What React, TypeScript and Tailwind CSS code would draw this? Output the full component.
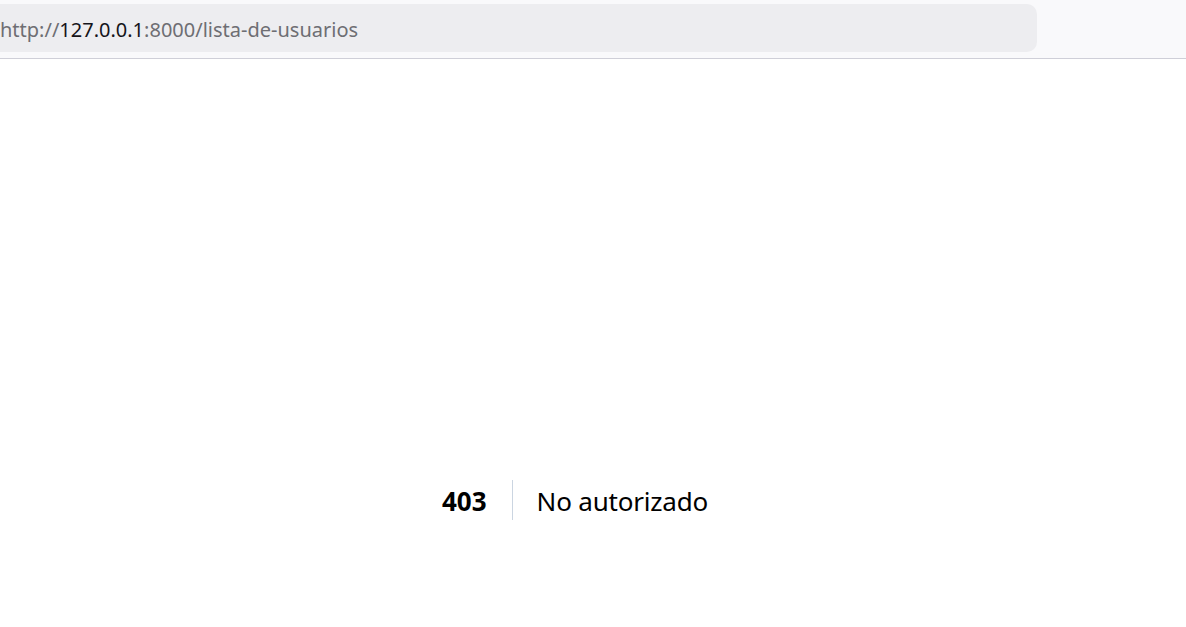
export default function App() {
  return (
    <div className="h-[627px] w-[1186px] overflow-hidden bg-white" style={{ fontFamily: '"Noto Sans", "Open Sans", sans-serif' }}>
      <div className="flex h-[59px] border-b border-[#cfcfd8] bg-[#f9f9fb] pt-[4px]">
        <div className="flex h-[48px] w-[1037px] items-center rounded-r-[10px] bg-[#ededf0] pt-[4px] text-[20px] text-[#6e6e73]">
          <span>http://</span>
          <span className="text-[#15141a]">127.0.0.1</span>
          <span>:8000/lista-de-usuarios</span>
        </div>
      </div>
      <div className="flex w-[1150px] justify-center pt-[420px]">
        <div className="flex items-center text-black">
          <div className="flex h-[40px] items-center border-r border-[#cbd5e1] pt-[3px] pr-[25px] text-[26px] font-bold">403</div>
          <div className="pt-[3px] pl-[24px] text-[26px] tracking-[-0.2px]">No autorizado</div>
        </div>
      </div>
    </div>
  );
}
